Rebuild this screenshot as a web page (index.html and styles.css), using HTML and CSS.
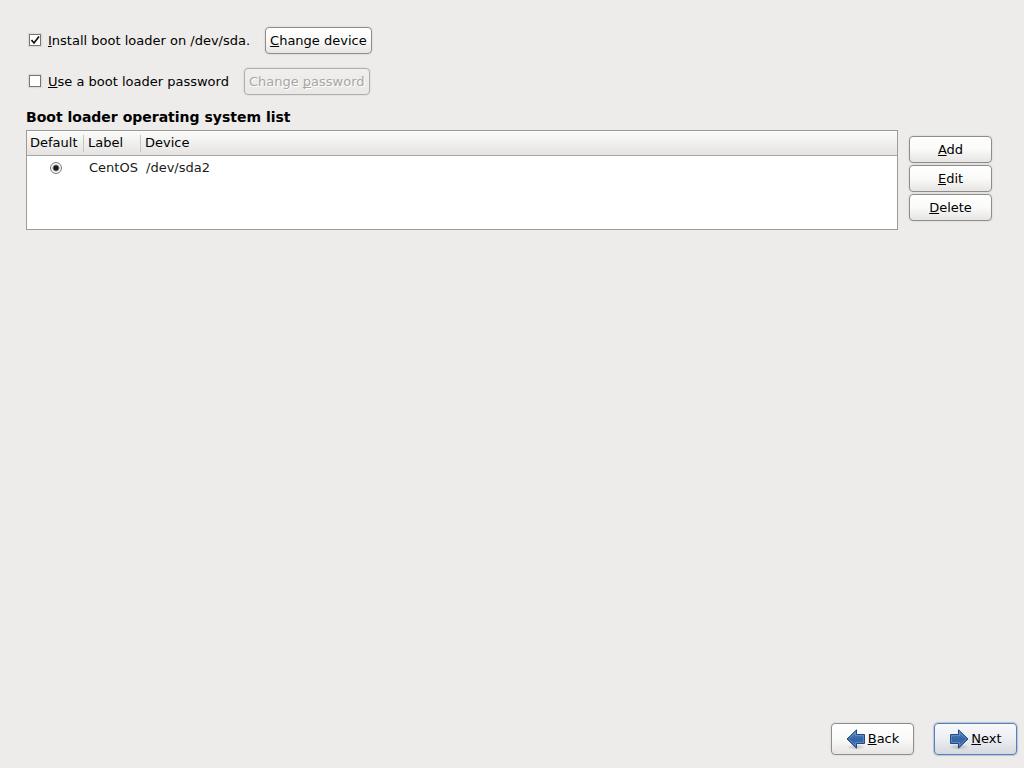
FILE: index.html
```html
<!DOCTYPE html>
<html lang="en">
<head>
<meta charset="UTF-8">
<meta name="viewport" content="width=device-width, initial-scale=1.0">
<title>Boot loader</title>
<link rel="stylesheet" href="styles.css">
</head>
<body>
<main class="content">
    <div class="option-row">
        <input type="checkbox" id="install" checked>
        <label for="install"><u>I</u>nstall boot loader on /dev/sda.</label>
        <button type="button" class="btn"><u>C</u>hange device</button>
    </div>
    <div class="option-row">
        <input type="checkbox" id="use-password">
        <label for="use-password"><u>U</u>se a boot loader password</label>
        <button type="button" class="btn" disabled>Change <u>p</u>assword</button>
    </div>
    <h2>Boot loader operating system list</h2>
    <div class="os-list">
        <div class="table-box">
            <table>
                <thead>
                    <tr>
                        <th class="col-default">Default</th>
                        <th class="col-label">Label</th>
                        <th>Device</th>
                    </tr>
                </thead>
                <tbody>
                    <tr>
                        <td><input type="radio" name="default-os" aria-label="CentOS" checked></td>
                        <td>CentOS</td>
                        <td>/dev/sda2</td>
                    </tr>
                </tbody>
            </table>
        </div>
        <div class="list-buttons">
            <button type="button" class="btn"><u>A</u>dd</button>
            <button type="button" class="btn"><u>E</u>dit</button>
            <button type="button" class="btn"><u>D</u>elete</button>
        </div>
    </div>
</main>
<footer class="nav">
    <button type="button" class="btn nav-btn">
        <svg width="20" height="24" viewBox="0 0 20 24" aria-hidden="true">
            <defs>
                <linearGradient id="blue" x1="0" y1="0" x2="0" y2="1">
                    <stop offset="0" stop-color="#5d8cc4"/>
                    <stop offset="0.5" stop-color="#3465a4"/>
                    <stop offset="1" stop-color="#3d70b0"/>
                </linearGradient>
                <radialGradient id="shade">
                    <stop offset="0" stop-color="#000" stop-opacity="0.2"/>
                    <stop offset="1" stop-color="#000" stop-opacity="0"/>
                </radialGradient>
            </defs>
            <ellipse cx="10" cy="20" rx="10" ry="3" fill="url(#shade)"/>
            <path d="M1 12L10.5 2.8V7.5H18.5V16.5H10.5V21.2Z" fill="url(#blue)" stroke="#204a87"/>
            <path d="M2.8 12L9.5 5.5V8.5H17.5V15.5H9.5V18.5Z" fill="none" stroke="#7ba3d4" stroke-opacity="0.5"/>
        </svg>
        <span><u>B</u>ack</span>
    </button>
    <button type="button" class="btn nav-btn next">
        <svg width="20" height="24" viewBox="0 0 20 24" aria-hidden="true">
            <ellipse cx="10" cy="20" rx="10" ry="3" fill="url(#shade)"/>
            <path d="M19 12L9.5 2.8V7.5H1.5V16.5H9.5V21.2Z" fill="url(#blue)" stroke="#204a87"/>
            <path d="M17.2 12L10.5 5.5V8.5H2.5V15.5H10.5V18.5Z" fill="none" stroke="#7ba3d4" stroke-opacity="0.5"/>
        </svg>
        <span><u>N</u>ext</span>
    </button>
</footer>
</body>
</html>
```
FILE: styles.css
```css
* {
    box-sizing: border-box;
}
body {
    margin: 0;
    min-height: 100vh;
    display: flex;
    flex-direction: column;
    background-color: #edeceb;
    color: #000;
    font: 13px/16px "DejaVu Sans", sans-serif;
}
u {
    text-decoration: underline;
    text-decoration-thickness: 1px;
    text-underline-offset: 1px;
    text-decoration-skip-ink: none;
}
.content {
    flex: 1;
    padding: 27px 32px 0 26px;
}
.option-row {
    display: flex;
    align-items: center;
    margin-bottom: 14px;
}
.option-row label {
    margin-right: 15px;
}
input {
    appearance: none;
    margin: 0;
    background-color: #fff;
}
input[type="checkbox"] {
    width: 12px;
    height: 12px;
    margin: 0 7px 1px 3px;
    border: 1px solid #777573;
    box-shadow: 0 0 1px 1px #dddcda;
}
input[type="checkbox"]:checked {
    background-image: url("data:image/svg+xml,%3Csvg xmlns='http://www.w3.org/2000/svg' viewBox='0 0 10 10'%3E%3Cpath d='M1.5 5L4 8L9 1.5' fill='none' stroke='%23111' stroke-width='1.7'/%3E%3C/svg%3E");
}
input[type="radio"] {
    display: block;
    width: 12px;
    height: 12px;
    margin: 0 auto;
    border: 1px solid #777573;
    border-radius: 50%;
    background-image: radial-gradient(circle, #1a1a1a 2px, transparent 4px);
}
.btn {
    height: 27px;
    padding: 0 4px;
    border: 1px solid #8f8d8a;
    border-radius: 4px;
    background: linear-gradient(#fff, #fafaf9 50%, #e6e5e4);
    box-shadow: 0 0 1px 1px #e2e1df;
    color: #000;
    font: inherit;
}
.btn:disabled {
    border-color: #b0aeab;
    background: linear-gradient(#f0efee, #e9e8e7);
    color: #a8a6a3;
    text-shadow: 1px 1px #fff;
}
h2 {
    margin: 0 0 5px;
    font-size: 14px;
    line-height: 16px;
}
.os-list {
    display: flex;
}
.table-box {
    flex: 1;
    min-height: 100px;
    border: 1px solid #9d9b97;
    background-color: #fff;
}
table {
    width: 100%;
    border-collapse: separate;
    border-spacing: 0;
    table-layout: fixed;
}
th {
    height: 25px;
    padding: 0 3px;
    border-bottom: 1px solid #a8a6a2;
    background: linear-gradient(to bottom, transparent 4px, #c8c6c3 4px, #c8c6c3 21px, transparent 21px) right / 1px 100% no-repeat, linear-gradient(#fcfcfb, #e4e3e1);
    font-weight: normal;
    text-align: left;
}
th + th {
    padding-left: 4px;
}
th:last-child {
    background: linear-gradient(#fcfcfb, #e4e3e1);
}
.col-default,
.col-label {
    width: 57px;
}
td {
    height: 24px;
    padding: 0 0 0 5px;
    color: #1a1a1a;
}
td:first-child {
    padding: 0;
}
.list-buttons {
    display: flex;
    flex-direction: column;
    gap: 2px;
    width: 83px;
    margin: 6px 0 0 11px;
}
.nav {
    display: flex;
    justify-content: flex-end;
    gap: 20px;
    padding: 0 7px 13px;
}
.nav-btn {
    display: flex;
    align-items: center;
    justify-content: center;
    gap: 2px;
    width: 83px;
    height: 32px;
}
.nav-btn span {
    padding-bottom: 1px;
}
.next {
    border-color: #5a7fb0;
    background: linear-gradient(#f8f9fb, #eceef2 50%, #d5d8de);
    box-shadow: 0 0 1px 1px #b4c6de;
}
```
